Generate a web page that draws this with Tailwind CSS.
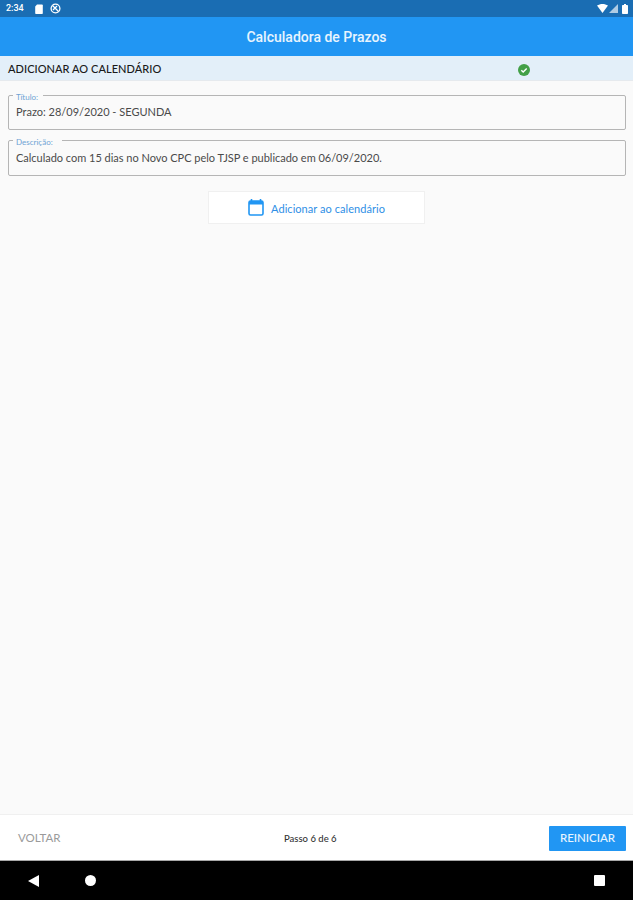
<!DOCTYPE html>
<html lang="en">
<head>
    <meta charset="UTF-8">
    <meta name="viewport" content="width=device-width, initial-scale=1.0">
    <title>Calculadora de Prazos</title>
    <script src="https://cdn.jsdelivr.net/npm/@tailwindcss/browser@4"></script>
</head>
<body class="bg-[#fafafa] font-['Lato',sans-serif] w-[633px] h-[900px] overflow-hidden flex flex-col">
    <!-- Status Bar -->
    <div class="h-[17px] bg-[#1a6db3] flex items-center pl-[6px] pr-[5px] text-white shrink-0">
        <span class="text-[9px] font-['Roboto',sans-serif] font-medium leading-none w-[29px]">2:34</span>
        <svg width="8" height="10" viewBox="0 0 8 10"><path d="M2 0.500h5a.8.8 0 0 1 .8.8v7.900a.8.8 0 0 1-.8.8H1a.8.8 0 0 1-.8-.8V2.500z" fill="#fff"/></svg>
        <svg class="ml-[7px]" width="11" height="11" viewBox="0 0 11 11"><circle cx="5.500" cy="5.500" r="4.400" fill="none" stroke="#fff" stroke-width="1.300"/><path d="M2.500 2.500l6 6M3 7l4-4" stroke="#fff" stroke-width="1.300"/></svg>
        <div class="flex-1"></div>
        <svg width="11" height="9" viewBox="0 0 11 9"><path d="M0 1.600C3.200-.5 7.800-.5 11 1.600L5.500 9z" fill="#fff"/></svg>
        <svg class="ml-[1px]" width="9" height="9" viewBox="0 0 9 9"><path d="M9 0v9H0z" fill="#fff" fill-opacity=".65"/></svg>
        <svg class="ml-[4px]" width="6" height="10" viewBox="0 0 6 10"><path d="M2 0h2v1h1.200a.8.8 0 0 1 .8.8v7.400a.8.8 0 0 1-.8.8H.8a.8.8 0 0 1-.8-.8V1.800A.8.800 0 0 1 .8 1H2z" fill="#fff"/></svg>
    </div>

    <!-- App Bar -->
    <div class="h-[39px] bg-[#2196f3] flex items-center justify-center pt-[2px] text-white/90 font-['Roboto',sans-serif] font-medium text-[14px] shrink-0">
        Calculadora de Prazos
    </div>

    <!-- Section Header -->
    <div class="h-[25px] bg-[#e3eff9] border-b border-[#e6eaee] relative flex items-center pl-[8px] pt-[3px] text-[11px] tracking-[0.05px] text-[#1a1a1a] font-medium shrink-0">
        ADICIONAR AO CALENDÁRIO
        <svg class="absolute left-[518px] top-[8px]" width="12" height="12" viewBox="0 0 12 12"><circle cx="6" cy="6" r="6" fill="#43a047"/><path d="M3.300 6.200l1.900 1.800 3.500-3.600" fill="none" stroke="#fff" stroke-width="1.400"/></svg>
    </div>

    <!-- Form -->
    <div class="flex-1 flex flex-col pt-[14px] px-[8px]">
        <div class="relative h-[35px] border border-[#b5b5b5] rounded-[2px] pl-[7px] pt-[9px] mr-[-1px]">
            <span class="absolute left-[4px] -top-[3px] bg-[#fafafa] pl-[3px] pr-[5px] text-[8px] text-[#6fa3d4] leading-[8px]">Título:</span>
            <div class="text-[11px] text-[#4a4a4a] leading-[14px]">Prazo: 28/09/2020 - SEGUNDA</div>
        </div>
        <div class="relative h-[36px] border border-[#b5b5b5] rounded-[2px] pl-[7px] pt-[10px] mt-[10px] mr-[-1px]">
            <span class="absolute left-[4px] -top-[3px] bg-[#fafafa] pl-[3px] pr-[9px] text-[8px] text-[#6fa3d4] leading-[8px]">Descrição:</span>
            <div class="text-[11px] text-[#4a4a4a] leading-[14px] tracking-[-0.02px]">Calculado com 15 dias no Novo CPC pelo TJSP e publicado em 06/09/2020.</div>
        </div>
        <div class="flex justify-center mt-[15px]">
            <button class="w-[217px] h-[33px] bg-white border border-[#f0f0f0] flex items-center justify-center gap-[7px] text-[11px] tracking-[0.05px] text-[#2f8fe6]">
                <svg width="16" height="17" viewBox="0 0 16 17"><path d="M3.500 0v2.500M12.500 0v2.500" stroke="#2196f3" stroke-width="1.600"/><rect x="1" y="2" width="14" height="14" rx="1.500" fill="none" stroke="#2196f3" stroke-width="1.600"/><rect x="1" y="2" width="14" height="3.500" fill="#2196f3"/></svg>
                <span class="pt-[3px]">Adicionar ao calendário</span>
            </button>
        </div>
    </div>

    <!-- Bottom Bar -->
    <div class="h-[47px] bg-white border-t border-[#f0f0f0] border-b-[1px] border-b-[#a8a8a8] flex items-center justify-between pl-[18px] pr-[7px] relative shrink-0">
        <span class="text-[11.5px] text-[#9a9a9a] pt-[1px]">VOLTAR</span>
        <span class="absolute left-[284px] top-[17px] text-[9.5px] leading-[14px] text-[#333] font-medium">Passo 6 de 6</span>
        <button class="w-[77px] h-[25px] mt-[1px] bg-[#2196f3] rounded-[1px] text-[11.5px] font-medium text-white/90">REINICIAR</button>
    </div>

    <!-- Nav Bar -->
    <div class="h-[39px] bg-black flex items-center pl-[28px] shrink-0">
        <svg width="11" height="12" viewBox="0 0 11 12"><path d="M11 0v12L0 6z" fill="#fff"/></svg>
        <div class="w-[11px] h-[11px] rounded-full bg-white ml-[46px]"></div>
        <div class="w-[11px] h-[11px] rounded-[1px] bg-white ml-auto mr-[28px]"></div>
    </div>
</body>
</html>
